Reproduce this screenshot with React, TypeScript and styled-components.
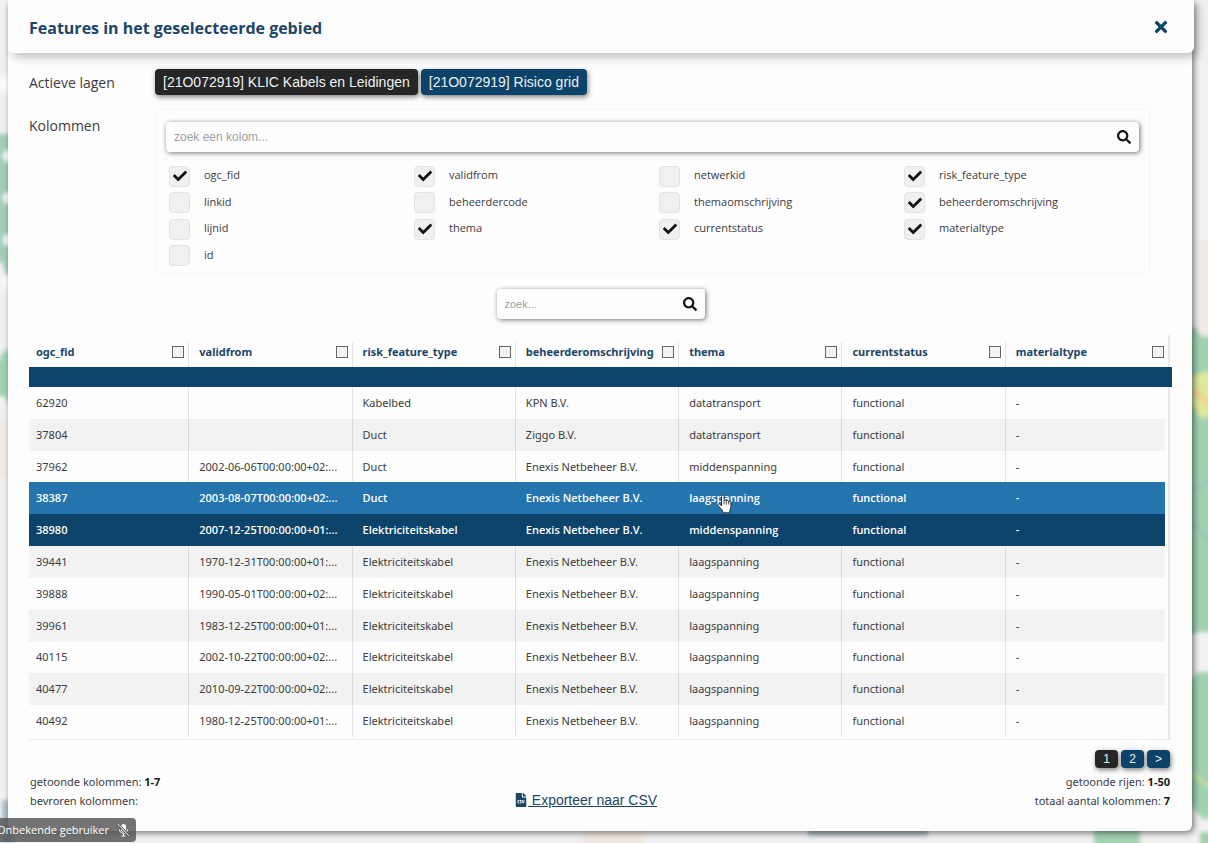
import React, { useState } from "react";
import styled, { createGlobalStyle, css } from "styled-components";
import { FaSearch, FaTimes, FaCheck, FaFileCsv } from "react-icons/fa";

const navy = "#0b436b";
const surface = "#fdfdfe";
const uiFont = `"Open Sans", "Noto Sans", sans-serif`;
const dataFont = `"Noto Sans", "Open Sans", sans-serif`;
const buttonFont = `"Liberation Sans", Arial, sans-serif`;

const GlobalStyle = createGlobalStyle`
  * { box-sizing: border-box; }
  body {
    margin: 0;
    background: #f1f1f3;
    color: #3c3c3c;
    font-family: ${uiFont};
    font-size: 11px;
    line-height: 16px;
  }
`;

const Page = styled.div`
  position: relative;
  min-height: 100vh;
  padding: 0 16px 12px 8px;
  overflow: hidden;
`;

const MapCanvas = styled.svg`
  position: absolute;
  inset: 0;
  width: 100%;
  height: 100%;
`;

const Dialog = styled.section`
  position: relative;
  display: flex;
  flex-direction: column;
  min-height: calc(100vh - 12px);
  background: ${surface};
  border-radius: 6px;
  box-shadow: 2px 2px 6px rgba(0, 0, 0, 0.5);
`;

const DialogHeader = styled.header`
  display: flex;
  align-items: center;
  justify-content: space-between;
  height: 53px;
  margin-right: -2px;
  padding: 0 24px 0 21px;
  background: ${surface};
  border-radius: 0 0 6px 6px;
  box-shadow: 4px 4px 10px rgba(0, 0, 0, 0.25);
`;

const Title = styled.h1`
  margin: 2px 0 0;
  font-size: 16px;
  line-height: 24px;
  font-weight: 700;
  color: #1b4668;
`;

const CloseButton = styled.button`
  display: flex;
  padding: 0;
  border: 0;
  background: none;
  color: ${navy};
  font-size: 18px;
  cursor: pointer;
`;

const DialogBody = styled.div`
  flex: 1;
  padding: 16px 20px 20px 21px;
`;

const Field = styled.div`
  display: grid;
  grid-template-columns: 126px 1fr;
  & + & {
    margin-top: 14px;
  }
`;

const FieldLabel = styled.span<{ $panel?: boolean }>`
  padding-top: ${(p) => (p.$panel ? "7px" : "4px")};
  font-size: 14px;
  line-height: 20px;
`;

const ButtonRow = styled.div`
  display: flex;
  gap: 3px;
`;

const LayerButton = styled.button<{ $active?: boolean }>`
  height: 26px;
  padding: 0 8px;
  border: 0;
  border-radius: 4px;
  background: ${(p) => (p.$active ? "#262626" : navy)};
  color: #eef2f5;
  font-family: ${buttonFont};
  font-size: 14px;
  line-height: 26px;
  box-shadow: 1px 2px 5px rgba(0, 0, 0, 0.5);
  cursor: pointer;
`;

const ColumnPanel = styled.div`
  margin-right: 22px;
  padding: 12px 10px 4px;
  border: 1px solid #f6f6f9;
  border-radius: 4px;
`;

const SearchBox = styled.label<{ $compact?: boolean }>`
  display: flex;
  align-items: center;
  width: ${(p) => (p.$compact ? "208px" : "100%")};
  height: 30px;
  padding: 0 8px;
  border-radius: 4px;
  background: ${surface};
  color: #161616;
  font-size: 14px;
  box-shadow: 1px 1px 5px rgba(0, 0, 0, 0.55);
`;

const SearchInput = styled.input<{ $compact?: boolean }>`
  flex: 1;
  min-width: 0;
  padding: 0;
  border: 0;
  outline: 0;
  background: none;
  font-family: ${buttonFont};
  font-size: ${(p) => (p.$compact ? "11px" : "12px")};
  &::placeholder {
    color: #a0a0a0;
  }
`;

const OptionGrid = styled.div`
  display: grid;
  grid-template-columns: repeat(4, 1fr);
  grid-template-rows: repeat(4, 1fr);
  height: 106px;
  margin: 11px -10px 0 3px;
`;

const Option = styled.label`
  display: flex;
  align-items: center;
  gap: 14px;
`;

const OptionText = styled.span`
  margin-bottom: 2px;
`;

const TickFrame = styled.span`
  display: grid;
  width: 21px;
  height: 21px;
  border: 1px solid #e3e3e5;
  border-radius: 4px;
  background: #f0f0f2;
  color: #111;
  font-size: 14px;
  > * {
    grid-area: 1 / 1;
    place-self: center;
  }
`;

const TickInput = styled.input`
  appearance: none;
  width: 100%;
  height: 100%;
  margin: 0;
  cursor: pointer;
  &:not(:checked) + svg {
    visibility: hidden;
  }
`;

const TableSearch = styled.div`
  display: flex;
  justify-content: center;
  margin: 15px 0 16px;
`;

const TableFrame = styled.div`
  padding: 7px 0 2px;
  border-bottom: 1px solid #ededf0;
  background: linear-gradient(#e8e8eb, #e8e8eb) right 2px top / 2px 100% no-repeat;
  font-family: ${dataFont};
`;

const Table = styled.table`
  width: 100%;
  height: 395px;
  border-spacing: 0;
  table-layout: fixed;
`;

const line = css`
  background: linear-gradient(rgba(20, 20, 40, 0.11), rgba(20, 20, 40, 0.11)) right 3px top / 1px 100% no-repeat;
`;

const HeadCell = styled.th`
  height: 25px;
  padding: 0 7px;
  text-align: left;
  color: #1b4668;
  &:not(:last-child) {
    ${line}
  }
`;

const HeadContent = styled.div`
  display: flex;
  align-items: center;
  justify-content: space-between;
  margin-top: -5px;
`;

const HeadCheck = styled.input`
  appearance: none;
  flex: none;
  width: 12px;
  height: 12px;
  margin: 0 1px 0 0;
  border: 1px solid #666;
  background: #f2f2f4;
`;

const FilterCell = styled.td`
  height: 20px;
  padding: 0;
  background: ${navy};
`;

type Tone = "plain" | "stripe" | "hover" | "selected";
const toneColor: Record<Tone, string> = {
  plain: "transparent",
  stripe: "#f2f2f3",
  hover: "#2474ae",
  selected: navy,
};

const Cell = styled.td<{ $tone: Tone }>`
  padding: 0 8px 0 7px;
  overflow: hidden;
  text-overflow: ellipsis;
  white-space: nowrap;
  ${(p) =>
    p.$tone === "hover" || p.$tone === "selected"
      ? css`
          color: #fff;
          font-family: ${uiFont};
          font-weight: 600;
        `
      : css`
          &:not(:last-child) {
            ${line}
          }
        `}
  &&& {
    background-color: ${(p) => toneColor[p.$tone]};
  }
  &:last-child {
    border-right: 7px solid transparent;
    background-clip: padding-box;
  }
`;

const PointerAnchor = styled.span`
  position: relative;
`;

const PointerIcon = styled.svg`
  position: absolute;
  left: 28px;
  top: 4px;
`;

const Footer = styled.footer`
  display: grid;
  grid-template-columns: 1fr auto 1fr;
  align-items: end;
  margin-top: 10px;
  padding: 0 2px 0 1px;
`;

const Stats = styled.div<{ $right?: boolean }>`
  display: flex;
  flex-direction: column;
  align-items: ${(p) => (p.$right ? "flex-end" : "flex-start")};
  font-family: ${dataFont};
  line-height: 19px;
  b {
    color: #161616;
  }
`;

const Pager = styled.nav`
  display: flex;
  gap: 3px;
  margin-bottom: 4px;
`;

const PageButton = styled.button<{ $active?: boolean }>`
  width: 23px;
  height: 18px;
  padding: 0;
  border: 0;
  border-radius: 4px;
  background: ${(p) => (p.$active ? "#262626" : navy)};
  color: #eef2f5;
  font-family: ${buttonFont};
  font-size: 12px;
  box-shadow: 1px 2px 5px rgba(0, 0, 0, 0.5);
`;

const ExportLink = styled.a`
  display: flex;
  align-items: center;
  margin: 0 29px 1px 0;
  color: #1b4668;
  font-family: ${buttonFont};
  font-size: 14px;
  line-height: 18px;
  text-decoration: underline;
  white-space: pre;
`;

const CallBadge = styled.div`
  position: absolute;
  left: -9px;
  bottom: 1px;
  display: flex;
  align-items: center;
  gap: 8px;
  height: 24px;
  padding: 0 6px;
  border-radius: 4px;
  background: rgba(80, 80, 80, 0.8);
  color: #fff;
`;

const options: [string, boolean][] = [
  ["ogc_fid", true], ["validfrom", true], ["netwerkid", false], ["risk_feature_type", true],
  ["linkid", false], ["beheerdercode", false], ["themaomschrijving", false], ["beheerderomschrijving", true],
  ["lijnid", false], ["thema", true], ["currentstatus", true], ["materialtype", true],
  ["id", false],
];

const columns = ["ogc_fid", "validfrom", "risk_feature_type", "beheerderomschrijving", "thema", "currentstatus", "materialtype"];

const cable = "Elektriciteitskabel";
const enexis = "Enexis Netbeheer B.V.";
const low = "laagspanning";
const mid = "middenspanning";

const rows: string[][] = [
  ["62920", "", "Kabelbed", "KPN B.V.", "datatransport"],
  ["37804", "", "Duct", "Ziggo B.V.", "datatransport"],
  ["37962", "2002-06-06T00:00:00+02:...", "Duct", enexis, mid],
  ["38387", "2003-08-07T00:00:00+02:...", "Duct", enexis, low],
  ["38980", "2007-12-25T00:00:00+01:...", cable, enexis, mid],
  ["39441", "1970-12-31T00:00:00+01:...", cable, enexis, low],
  ["39888", "1990-05-01T00:00:00+02:...", cable, enexis, low],
  ["39961", "1983-12-25T00:00:00+01:...", cable, enexis, low],
  ["40115", "2002-10-22T00:00:00+02:...", cable, enexis, low],
  ["40477", "2010-09-22T00:00:00+02:...", cable, enexis, low],
  ["40492", "1980-12-25T00:00:00+01:...", cable, enexis, low],
].map((r) => [...r, "functional", "-"]);

const toneOf = (i: number): Tone => (i === 3 ? "hover" : i === 4 ? "selected" : i % 2 ? "stripe" : "plain");

function MapBackground() {
  return (
    <MapCanvas viewBox="0 0 1208 843" preserveAspectRatio="none" aria-hidden="true">
      <defs>
        <filter id="soft" x="-20%" y="-20%" width="140%" height="140%">
          <feGaussianBlur stdDeviation="2" />
        </filter>
      </defs>
      <g filter="url(#soft)">
        <path d="M-6 134H14V290L8 280 2 262H-6Z" fill="#a4cdb9" />
        <path d="M-6 370 4 350H14V412L4 396H-6Z" fill="#9fd3b0" />
        <path d="M-6 420H14V480H-6Z" fill="#f1eae4" />
        <path d="M2 800H14V843H2Z" fill="#a9bccb" />
        <circle cx="7" cy="84" r="8" fill="#fff" />
        <circle cx="9" cy="156" r="6" fill="#fff" />
        <circle cx="9" cy="198" r="6" fill="#fff" />
        <circle cx="9" cy="240" r="6" fill="#fff" />
        <circle cx="9" cy="282" r="7" fill="#fff" />
        <path d="M1192 240H1215V340H1192Z" fill="#f0ebe9" />
        <path d="M1186 325 1196 328 1201 336H1215V632H1198L1186 637Z" fill="#a1d1b0" />
        <path d="M1192 378 1202 372 1215 370V416L1200 418 1192 404Z" fill="#dfe89b" />
        <path d="M1194 390 1212 406" stroke="#efd08c" strokeWidth="6" />
        <path d="M1190 520 1212 545M1190 720 1212 704M1192 492 1212 478" stroke="#98bac0" strokeWidth="2" />
        <path d="M1186 684 1198 672H1215V816L1204 820 1186 800Z" fill="#a1d1b0" />
        <path d="M1190 773 1212 788" stroke="#cfe09a" strokeWidth="3" />
        <path d="M1094 826H1140V850H1094ZM1200 832H1215V850H1200Z" fill="#a1d1b0" />
        <path d="M808 824H928V836H808Z" fill="#a9b6be" />
        <path d="M585 828H650L640 850H580Z" fill="#efe8df" />
      </g>
    </MapCanvas>
  );
}

function HandPointer() {
  return (
    <PointerIcon width="15" height="20" viewBox="0 0 15 20" aria-hidden="true">
      <path
        d="M4.5 12V2.2a1.3 1.3 0 0 1 2.6 0V7a1.2 1.2 0 0 1 2.3.3 1.2 1.2 0 0 1 2.3.6 1.1 1.1 0 0 1 2.2.5V13c0 1.600-.9 2.500-1.200 4v1.800H5.700V17C4.700 15 2.500 13.400 1.200 11.500c-.8-1.300.7-2.300 1.700-1.400Z"
        fill="#fff"
        stroke="#222"
        strokeWidth="0.9"
      />
      <path d="M7.100 7v3.500M9.400 7.500v3M11.700 8v2.500" stroke="#222" strokeWidth="0.8" />
    </PointerIcon>
  );
}

function MutedMic() {
  return (
    <svg width="13" height="14" viewBox="0 0 13 14" aria-hidden="true">
      <rect x="4" y="1" width="5" height="8" rx="2.500" fill="#fff" />
      <path d="M2.500 6.500c0 5 8 5 8 0M6.500 10v3M4.500 13h4" fill="none" stroke="#fff" />
      <path d="M1.500 1.500 12 13" stroke="#505050" strokeWidth="2.500" />
      <path d="M1 1 12 13" stroke="#fff" />
    </svg>
  );
}

export default function App() {
  const [checked, setChecked] = useState<Record<string, boolean>>(Object.fromEntries(options));

  return (
    <>
      <GlobalStyle />
      <Page>
        <MapBackground />
        <Dialog role="dialog" aria-labelledby="dialog-title">
          <DialogHeader>
            <Title id="dialog-title">Features in het geselecteerde gebied</Title>
            <CloseButton aria-label="Sluiten"><FaTimes /></CloseButton>
          </DialogHeader>
          <DialogBody>
            <Field>
              <FieldLabel>Actieve lagen</FieldLabel>
              <ButtonRow>
                <LayerButton $active>[21O072919] KLIC Kabels en Leidingen</LayerButton>
                <LayerButton>[21O072919] Risico grid</LayerButton>
              </ButtonRow>
            </Field>
            <Field>
              <FieldLabel $panel>Kolommen</FieldLabel>
              <ColumnPanel>
                <SearchBox>
                  <SearchInput type="text" placeholder="zoek een kolom..." aria-label="zoek een kolom" />
                  <FaSearch />
                </SearchBox>
                <OptionGrid>
                  {options.map(([name]) => (
                    <Option key={name}>
                      <TickFrame>
                        <TickInput
                          type="checkbox"
                          checked={checked[name]}
                          onChange={(e) => setChecked({ ...checked, [name]: e.target.checked })}
                        />
                        <FaCheck />
                      </TickFrame>
                      <OptionText>{name}</OptionText>
                    </Option>
                  ))}
                </OptionGrid>
              </ColumnPanel>
            </Field>
            <TableSearch>
              <SearchBox $compact>
                <SearchInput $compact type="text" placeholder="zoek..." aria-label="zoek" />
                <FaSearch />
              </SearchBox>
            </TableSearch>
            <TableFrame>
              <Table>
                <thead>
                  <tr>
                    {columns.map((c) => (
                      <HeadCell key={c} scope="col">
                        <HeadContent>
                          {c}
                          <HeadCheck type="checkbox" aria-label={c} />
                        </HeadContent>
                      </HeadCell>
                    ))}
                  </tr>
                  <tr><FilterCell colSpan={7} /></tr>
                </thead>
                <tbody>
                  {rows.map((row, i) => (
                    <tr key={row[0]}>
                      {row.map((value, j) => (
                        <Cell key={j} $tone={toneOf(i)}>
                          {i === 3 && j === 4 ? (
                            <PointerAnchor>{value}<HandPointer /></PointerAnchor>
                          ) : value}
                        </Cell>
                      ))}
                    </tr>
                  ))}
                </tbody>
              </Table>
            </TableFrame>
            <Footer>
              <Stats>
                <span>getoonde kolommen: <b>1-7</b></span>
                <span>bevroren kolommen:</span>
              </Stats>
              <ExportLink href="#export"><FaFileCsv /> Exporteer naar CSV</ExportLink>
              <Stats $right>
                <Pager aria-label="Pagina's">
                  <PageButton $active>1</PageButton>
                  <PageButton>2</PageButton>
                  <PageButton>&gt;</PageButton>
                </Pager>
                <span>getoonde rijen: <b>1-50</b></span>
                <span>totaal aantal kolommen: <b>7</b></span>
              </Stats>
            </Footer>
          </DialogBody>
        </Dialog>
        <CallBadge>Onbekende gebruiker <MutedMic /></CallBadge>
      </Page>
    </>
  );
}
